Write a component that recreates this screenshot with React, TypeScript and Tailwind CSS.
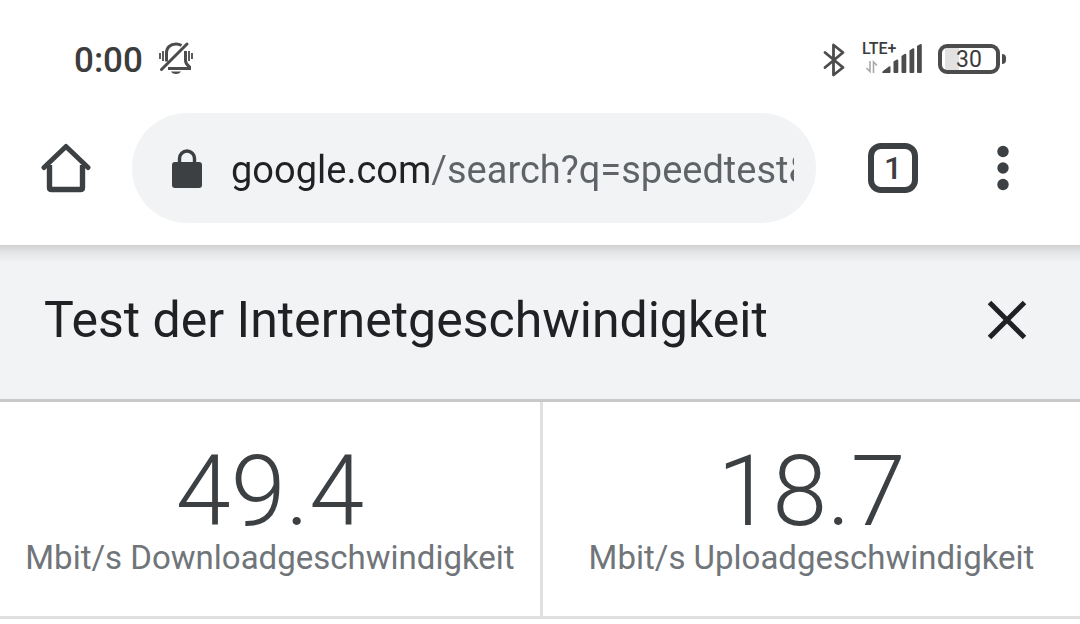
import React from "react";

const BellOff: React.FC = () => (
  <svg width="36" height="36" viewBox="0 0 36 36" fill="none" stroke="#4c4c4c" strokeWidth="3" aria-hidden="true">
    <path d="M7.500 20.500V12C7.500 6.500 11.500 3 17 3c2.200 0 4 .6 5.500 1.600" />
    <path d="M26.500 10v9.500c0 2.800 1.500 4.500 4 6.500v1.500H9" />
    <path d="M2.500 28.500 28 3" strokeLinecap="round" />
    <path d="M12 30.500h10c-1 1.700-2.800 2.500-5 2.500s-4-.8-5-2.500z" fill="#4c4c4c" stroke="none" />
    <path d="M1 12v6M4 10v10M30 10v10M33 12v6" strokeWidth="1.800" />
  </svg>
);

const Bluetooth: React.FC = () => (
  <svg width="22" height="34" viewBox="0 0 22 34" fill="none" stroke="#4c4c4c" strokeWidth="2.800" strokeLinejoin="round" strokeLinecap="round" aria-hidden="true">
    <path d="M2 9.500 20 24.500 10.500 32V2L20 9.500 2 24.500" />
  </svg>
);

const Signal: React.FC = () => (
  <svg width="58" height="30" viewBox="0 0 58 30" aria-hidden="true">
    <path d="M6 17v10.500L2.500 24M9.500 29V18l3.500 3.500" fill="none" stroke="#a8a8a8" strokeWidth="1.600" />
    <path
      d="M19 29c-1 0-1-1 0-2l6-4.500c1-.5 1.500 0 1.500 1V28q0 1-1 1zM29.500 17.500l3-1.800q1.800-.7 1.800 1V28q0 1-1 1h-2.800q-1 0-1-1zM37.500 12l3-2q1.800-.8 1.800 1V28q0 1-1 1h-2.800q-1 0-1-1zM45.500 6.500l3-2q1.800-.8 1.800 1V28q0 1-1 1h-2.800q-1 0-1-1zM53 2l3-1.800q1.800-.7 1.800 1V28q0 1-1 1H54q-1 0-1-1z"
      fill="#4c4c4c"
    />
  </svg>
);

const Home: React.FC = () => (
  <svg width="50" height="50" viewBox="0 0 50 50" fill="none" stroke="#3c4043" aria-hidden="true">
    <path d="M8.500 22v22.500q0 2 2 2h29q2 0 2-2V22" strokeWidth="5.400" />
    <path d="M3 24.500 25 3.500l22 21" strokeWidth="5" strokeLinecap="round" strokeLinejoin="round" />
  </svg>
);

const Lock: React.FC = () => (
  <svg width="30" height="39" viewBox="0 0 30 39" aria-hidden="true">
    <path d="M7.500 15V9.500a7.500 7.500 0 0 1 15 0V15" fill="none" stroke="#3c4043" strokeWidth="3.400" />
    <rect y="13" width="30" height="26" rx="3" fill="#3c4043" />
  </svg>
);

const StatusBar: React.FC = () => (
  <div className="flex items-center pt-[41px] pb-[30px] pl-[74px] pr-[74px] text-[#3c3c3c]">
    <span className="pt-0.5 text-[35px] leading-[36px] font-medium">0:00</span>
    <span className="ml-4 mr-auto pb-0.5">
      <BellOff />
    </span>
    <Bluetooth />
    <div className="relative ml-[17px] flex h-[36px] w-[60px] items-end justify-end pb-1">
      <Signal />
      <span className="absolute -top-[2px] left-0 text-[16px] leading-[18px] font-medium">LTE+</span>
    </div>
    <div className="ml-4 flex items-center gap-0.5 pb-0.5">
      <div className="flex h-[30px] w-[62px] items-center justify-center rounded-[9px] border-4 border-[#4c4c4c] bg-[linear-gradient(90deg,transparent_3px,#e2e2e2_3px,#e2e2e2_17px,transparent_17px)] bg-no-repeat pt-0.5 text-[23px] leading-[22px]">
        30
      </div>
      <div className="h-[10px] w-1 rounded-r-sm bg-[#4c4c4c]" />
    </div>
  </div>
);

const Toolbar: React.FC = () => (
  <div className="flex items-center pt-1 pr-[71px] pb-[22px] pl-[41px]">
    <button type="button" aria-label="Startseite">
      <Home />
    </button>
    <label className="ml-[41px] flex h-[110px] min-w-0 flex-1 items-center rounded-full bg-[#f1f3f4] pr-[22px] pl-10">
      <Lock />
      <input
        type="text"
        aria-label="Adresse"
        defaultValue="google.com/search?q=speedtest&oq=speedtest"
        className="ml-7 h-[60px] min-w-0 flex-1 bg-[linear-gradient(90deg,#202124_201px,#5f6368_201px)] bg-clip-text pt-1 pl-px text-[38px] text-transparent outline-none"
      />
    </label>
    <button
      type="button"
      aria-label="Tabs"
      className="ml-[52px] flex size-[50px] items-center justify-center rounded-[13px] border-[6px] border-[#3c4043] text-[32px] leading-[38px] font-medium text-[#3c4043]"
    >
      1
    </button>
    <button type="button" aria-label="Menü" className="ml-[79px]">
      <svg width="12" height="46" viewBox="0 0 12 46" fill="#3c4043" aria-hidden="true">
        <circle cx="6" cy="6.500" r="5.700" />
        <circle cx="6" cy="23" r="5.700" />
        <circle cx="6" cy="39.500" r="5.700" />
      </svg>
    </button>
  </div>
);

const Result: React.FC<{ value: string; label: string }> = ({ value, label }) => (
  <div className="flex flex-col items-center border-[#e0e0e0] pt-10 pb-10 last:border-l-3">
    <span className="text-[99px] leading-[98px] font-light text-[#3c4043]">{value}</span>
    <span className="text-[33px] leading-[36px] whitespace-nowrap text-[#70757a]">{label}</span>
  </div>
);

const App: React.FC = () => {
  return (
    <div className="min-h-screen bg-white font-[Roboto,sans-serif]">
      <StatusBar />
      <Toolbar />
      <main>
        <div className="flex items-center justify-between border-b-3 border-[#c6c8ca] bg-[#f1f3f4] bg-[linear-gradient(180deg,#cfd0d1_0px,#e3e4e5_7px,#f1f3f4_18px)] pt-11 pr-[53px] pb-12 pl-11">
          <h1 className="text-[50px] leading-[62px] text-[#202124]">Test der Internetgeschwindigkeit</h1>
          <button type="button" aria-label="Schließen">
            <svg width="40" height="40" viewBox="0 0 40 40" stroke="#202124" strokeWidth="5" aria-hidden="true">
              <path d="M2.500 2.500l35 35M37.500 2.500l-35 35" />
            </svg>
          </button>
        </div>
        <div className="grid grid-cols-2 border-b-3 border-[#e0e0e0]">
          <Result value="49.4" label="Mbit/s Downloadgeschwindigkeit" />
          <Result value="18.7" label="Mbit/s Uploadgeschwindigkeit" />
        </div>
      </main>
    </div>
  );
};

export default App;
